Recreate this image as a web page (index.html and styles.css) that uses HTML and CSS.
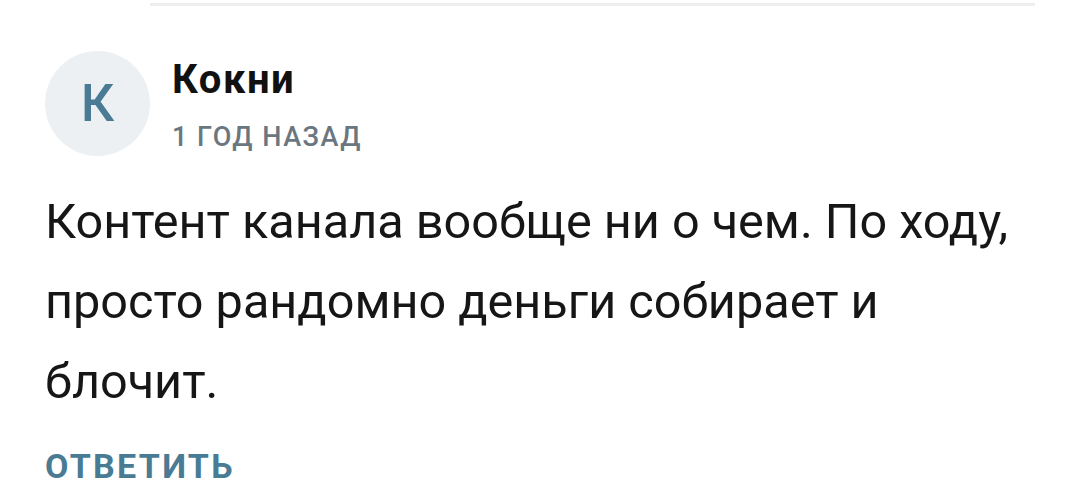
FILE: index.html
```html
<!DOCTYPE html>
<html lang="ru">
<head>
<meta charset="utf-8">
<link rel="stylesheet" href="styles.css">
</head>
<body>
<div class="page">
  <div class="divider"></div>
  <div class="comment">
    <div class="header">
      <div class="avatar">К</div>
      <div class="meta">
        <div class="name">Кокни</div>
        <div class="time">1 год назад</div>
      </div>
    </div>
    <p class="text">Контент канала вообще ни о чем. По ходу, просто рандомно деньги собирает и блочит.</p>
    <div class="reply">Ответить</div>
  </div>
</div>
</body>
</html>
```
FILE: styles.css
```css
html, body {
  margin: 0;
  padding: 0;
  background: #ffffff;
}
body {
  font-family: Roboto, "Noto Sans", sans-serif;
  color: #161616;
}
.page {
  width: 1080px;
  height: 496px;
  overflow: hidden;
  padding-top: 3px;
  box-sizing: border-box;
}
.divider {
  margin-left: 150px;
  width: 885px;
  height: 3px;
  background: #eeeeee;
}
.comment {
  padding-left: 45px;
  padding-right: 40px;
}
.header {
  display: flex;
  align-items: flex-start;
  margin-top: 45px;
  gap: 22px;
}
.avatar {
  width: 105px;
  height: 105px;
  border-radius: 50%;
  background: #edf0f3;
  color: #4a7b94;
  font-size: 52px;
  font-weight: 500;
  display: flex;
  align-items: center;
  justify-content: center;
  flex: none;
}
.meta {
  display: flex;
  flex-direction: column;
  padding-top: 7px;
}
.name {
  font-size: 40px;
  font-weight: 700;
  line-height: 44px;
  letter-spacing: 1.5px;
  color: #111111;
}
.time {
  margin-top: 20px;
  font-size: 27px;
  font-weight: 500;
  line-height: 30px;
  letter-spacing: 1.5px;
  text-transform: uppercase;
  color: #6b7780;
}
.text {
  margin: 26px 0 0;
  font-size: 48.6px;
  line-height: 80px;
  color: #161616;
}
.reply {
  margin-top: 24px;
  font-size: 34px;
  line-height: 40px;
  font-weight: 700;
  letter-spacing: 2.3px;
  text-transform: uppercase;
  color: #4a7b94;
}
```
